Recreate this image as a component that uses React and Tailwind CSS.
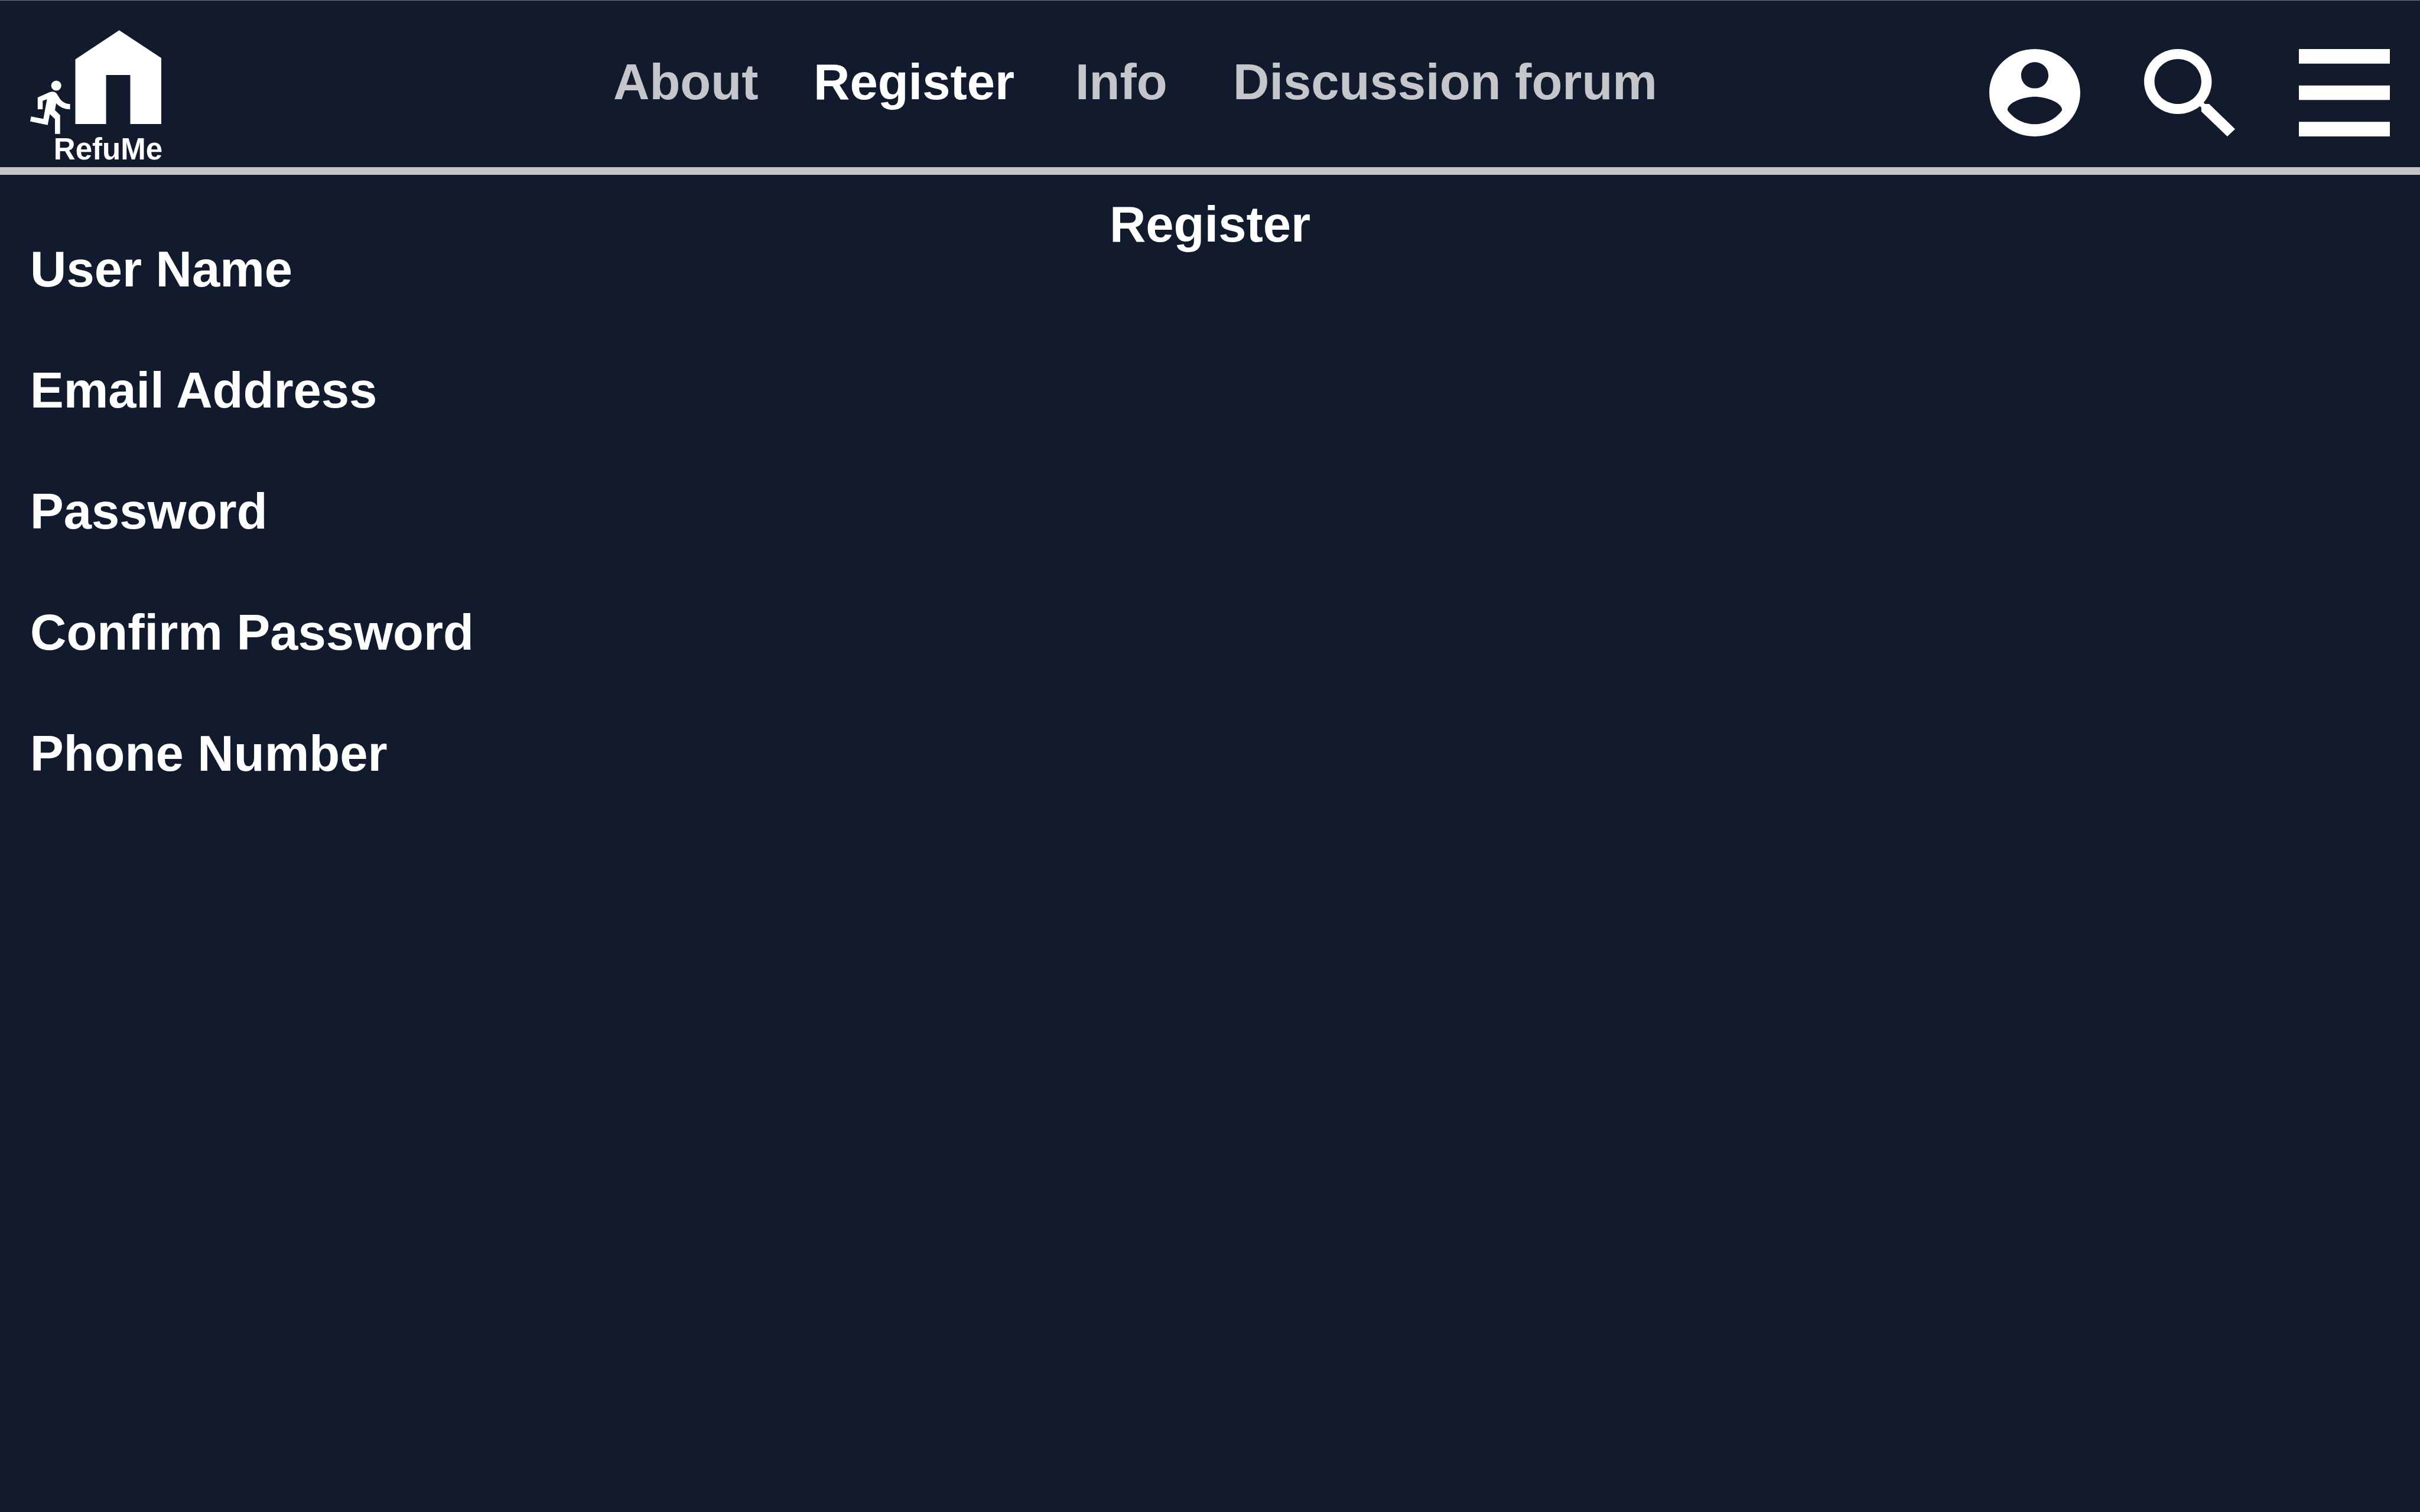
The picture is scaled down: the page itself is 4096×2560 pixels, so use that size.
const NAV_LINKS = [
  { label: 'About', href: '#about' },
  { label: 'Register', href: '#register', current: true },
  { label: 'Info', href: '#info' },
  { label: 'Discussion forum', href: '#forum' },
];

const FIELDS = [
  { id: 'username', label: 'User Name', type: 'text' },
  { id: 'email', label: 'Email Address', type: 'email' },
  { id: 'password', label: 'Password', type: 'password' },
  { id: 'confirm', label: 'Confirm Password', type: 'password' },
  { id: 'phone', label: 'Phone Number', type: 'tel' },
];

const ACTIONS = [
  {
    label: 'Account',
    viewBox: '2 2 20 20',
    d: 'M12 2C6.48 2 2 6.48 2 12s4.48 10 10 10 10-4.48 10-10S17.52 2 12 2zm0 3c1.66 0 3 1.34 3 3s-1.34 3-3 3-3-1.34-3-3 1.34-3 3-3zm0 14.2c-2.5 0-4.71-1.28-6-3.22.03-1.99 4-3.08 6-3.08 1.99 0 5.97 1.09 6 3.08-1.29 1.94-3.5 3.22-6 3.22z',
  },
  {
    label: 'Search',
    viewBox: '3 3 17.49 17.49',
    d: 'M15.5 14h-.79l-.28-.27C15.41 12.59 16 11.11 16 9.5 16 5.91 13.09 3 9.5 3S3 5.91 3 9.5 5.91 16 9.5 16c1.61 0 3.09-.59 4.23-1.57l.27.28v.79l5 4.99L20.49 19l-4.99-5zm-6 0C7.01 14 5 11.99 5 9.5S7.01 5 9.5 5 14 7.01 14 9.5 11.99 14 9.5 14z',
  },
  {
    label: 'Menu',
    viewBox: '3 6 18 12',
    d: 'M3 18h18v-2H3v2zm0-5h18v-2H3v2zm0-7v2h18V6H3z',
  },
];

function Logo() {
  return (
    <a href="#home" className="flex w-[224px] shrink-0 flex-col">
      <svg viewBox="75 74 972 769" className="h-[176px] w-[222px]" fill="currentColor" aria-hidden="true">
        <path d="M735 74L1047 280V769H817V406H638V769H410V290Z" />
        <circle cx="268.5" cy="485" r="37.5" />
        <path d="M131 572L215 535Q228 530 243 530Q262 530 274 547L295 581C312 605 340 621 371 621V660C330 660 295 645 268 615L259 667L297 704V843H259V732L221 696L205 777L75 750L82 713L173 731L200 585L168 597V660H131Z" />
      </svg>
      <span className="self-end text-[51px] leading-[51px]">RefuMe</span>
    </a>
  );
}

function Header() {
  return (
    <header className="flex items-start border-t border-b-[13px] border-t-[#6e727d] border-b-[#c4c4c4] px-[51px] pt-[50px] pb-[5px]">
      <Logo />
      <nav aria-label="Main" className="mt-10 ml-[763px] grid shrink-0 grid-cols-[339px_443px_267px_auto] leading-[96px] whitespace-nowrap">
        {NAV_LINKS.map((link) => (
          <a
            key={link.label}
            href={link.href}
            aria-current={link.current ? 'page' : undefined}
            className={link.current ? 'text-white' : 'text-[#c4c6c9]'}
          >
            {link.label}
          </a>
        ))}
      </nav>
      <div className="mt-8 ml-auto flex gap-[108px]">
        {ACTIONS.map((action) => (
          <button key={action.label} type="button" aria-label={action.label}>
            <svg viewBox={action.viewBox} preserveAspectRatio="none" className="h-[148px] w-[154px]" fill="currentColor" aria-hidden="true">
              <path d={action.d} />
            </svg>
          </button>
        ))}
      </div>
    </header>
  );
}

export default function App() {
  return (
    <div className="min-h-screen bg-[#121a2e] font-['Liberation_Sans',Arial,sans-serif] text-[85px] font-bold text-white">
      <Header />
      <main className="px-[51px] pt-[46px] leading-[76px]">
        <h1 className="text-center">Register</h1>
        <form>
          {FIELDS.map((field) => (
            <div key={field.id} className="flex flex-col items-start">
              <label htmlFor={field.id}>{field.label}</label>
              <input
                id={field.id}
                name={field.id}
                type={field.type}
                className="h-[129px] w-full bg-transparent outline-none"
              />
            </div>
          ))}
        </form>
      </main>
    </div>
  );
}
